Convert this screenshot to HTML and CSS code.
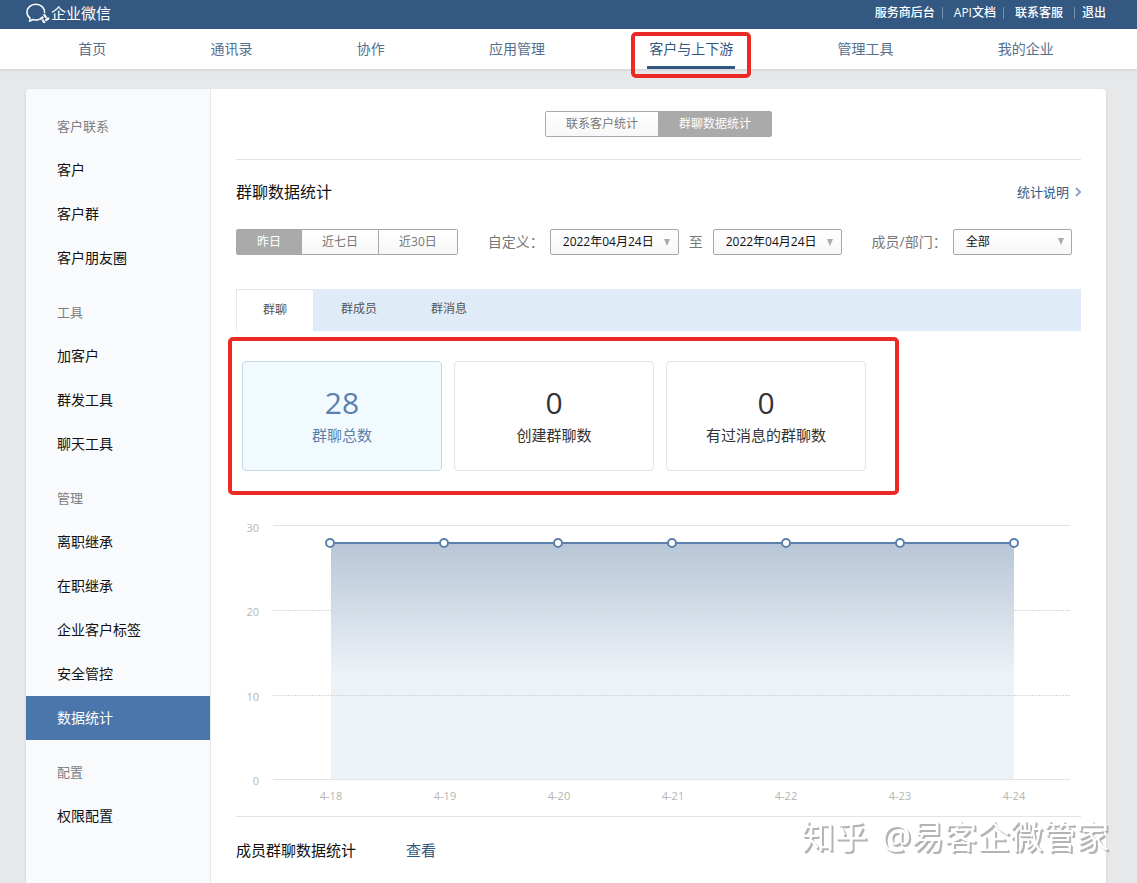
FILE: index.html
```html
<!DOCTYPE html>
<html lang="zh-CN">
<head>
<meta charset="utf-8">
<meta name="viewport" content="width=device-width, initial-scale=1">
<title>企业微信 - 群聊数据统计</title>
<link rel="stylesheet" href="styles.css">
</head>
<body>
<header class="topbar">
  <a class="brand" href="#">
    <svg class="brand-icon" viewBox="0 0 24 20" fill="none" aria-hidden="true">
      <path d="M18.600 9.600C18.600 4.800 15 1.300 9.800 1.300S1 4.800 1 9.200C1 11.700 2.200 13.900 4.100 15.200L3.500 18.300 6.800 16.500C8.800 17.200 11 17.200 12.900 16.500" stroke="#fff" stroke-width="1.500" stroke-linecap="round" stroke-linejoin="round"/>
      <path d="M18.300 11.800 19.800 14M22.200 15.500 20.200 17M18.300 19.700 17 17.500M14.400 15.900 16.600 14.500" stroke="#fff" stroke-width="2.200" stroke-linecap="round"/>
    </svg>
    <span>企业微信</span>
  </a>
  <ul class="top-links">
    <li><a href="#">服务商后台</a></li>
    <li><a href="#">API文档</a></li>
    <li class="service"><a href="#">联系客服</a></li>
    <li class="logout"><a href="#">退出</a></li>
  </ul>
</header>
<nav class="nav">
  <a href="#">首页</a>
  <a href="#">通讯录</a>
  <a href="#">协作</a>
  <a href="#">应用管理</a>
  <a class="current" href="#"><span>客户与上下游</span></a>
  <a href="#">管理工具</a>
  <a href="#">我的企业</a>
</nav>
<div class="panel">
  <aside class="sidebar">
    <section class="group">
      <h2>客户联系</h2>
      <a href="#">客户</a>
      <a href="#">客户群</a>
      <a href="#">客户朋友圈</a>
    </section>
    <section class="group">
      <h2>工具</h2>
      <a href="#">加客户</a>
      <a href="#">群发工具</a>
      <a href="#">聊天工具</a>
    </section>
    <section class="group">
      <h2>管理</h2>
      <a href="#">离职继承</a>
      <a href="#">在职继承</a>
      <a href="#">企业客户标签</a>
      <a href="#">安全管控</a>
      <a class="active" href="#">数据统计</a>
    </section>
    <section class="group">
      <h2>配置</h2>
      <a href="#">权限配置</a>
    </section>
  </aside>
  <main class="main">
    <div class="switch-row">
      <div class="segment">
        <button type="button">联系客户统计</button>
        <button type="button" class="on">群聊数据统计</button>
      </div>
    </div>
    <div class="title-row">
      <h1>群聊数据统计</h1>
      <a class="help" href="#">统计说明
        <svg class="chevron" viewBox="0 0 6 10" fill="none" aria-hidden="true"><path d="M1 1 5 5 1 9" stroke="#8fa5bd" stroke-width="2"/></svg>
      </a>
    </div>
    <div class="filters">
      <div class="segment">
        <button type="button" class="on">昨日</button>
        <button type="button">近七日</button>
        <button type="button">近30日</button>
      </div>
      <div class="field">
        <span id="range-label">自定义：</span>
        <div class="range" role="group" aria-labelledby="range-label">
          <button type="button" class="picker">2022年04月24日<i class="arrow"></i></button>
          <span>至</span>
          <button type="button" class="picker">2022年04月24日<i class="arrow"></i></button>
        </div>
      </div>
      <div class="field">
        <label for="dept">成员/部门：</label>
        <div class="select-box">
          <select id="dept"><option>全部</option></select>
          <i class="arrow"></i>
        </div>
      </div>
    </div>
    <div class="tabs" role="tablist">
      <button type="button" role="tab" aria-selected="true" class="selected">群聊</button>
      <button type="button" role="tab" aria-selected="false">群成员</button>
      <button type="button" role="tab" aria-selected="false">群消息</button>
    </div>
    <div class="cards">
      <button type="button" class="card chosen"><strong>28</strong><span>群聊总数</span></button>
      <button type="button" class="card"><strong>0</strong><span>创建群聊数</span></button>
      <button type="button" class="card"><strong>0</strong><span>有过消息的群聊数</span></button>
    </div>
    <svg class="chart" viewBox="0 0 845 296" role="img" aria-label="群聊总数">
      <defs>
        <linearGradient id="fade" x1="0" y1="0" x2="0" y2="1">
          <stop offset="0" stop-color="#b8c6d7"/>
          <stop offset="0.560" stop-color="#edf2f7"/>
          <stop offset="1" stop-color="#edf2f6"/>
        </linearGradient>
      </defs>
      <rect x="95" y="32" width="683" height="236" fill="url(#fade)"/>
      <g class="grid">
        <path d="M37 14.500H834M37 268.500H834"/>
        <path class="dashed" d="M37 99.500H834M37 184.500H834"/>
      </g>
      <g class="axis y-axis">
        <text x="23" y="21">30</text>
        <text x="23" y="105">20</text>
        <text x="23" y="190">10</text>
        <text x="23" y="274">0</text>
      </g>
      <g class="axis x-axis">
        <text x="95" y="289">4-18</text>
        <text x="209" y="289">4-19</text>
        <text x="323" y="289">4-20</text>
        <text x="437" y="289">4-21</text>
        <text x="550" y="289">4-22</text>
        <text x="664" y="289">4-23</text>
        <text x="778" y="289">4-24</text>
      </g>
      <g class="series">
        <path d="M94 32H778"/>
        <circle cx="94" cy="32" r="4"/>
        <circle cx="208" cy="32" r="4"/>
        <circle cx="322" cy="32" r="4"/>
        <circle cx="436" cy="32" r="4"/>
        <circle cx="550" cy="32" r="4"/>
        <circle cx="664" cy="32" r="4"/>
        <circle cx="778" cy="32" r="4"/>
      </g>
    </svg>
    <div class="members">
      <h2>成员群聊数据统计</h2>
      <a href="#">查看</a>
    </div>
  </main>
</div>
<div class="watermark"><span>知乎</span><span>@易客企微管家</span></div>
</body>
</html>
```
FILE: styles.css
```css
* { box-sizing: border-box; }

body {
  margin: 0;
  min-height: 100vh;
  display: flex;
  flex-direction: column;
  background: #e7e8ea;
  color: #111;
  font: 14px/20px "Open Sans", "Noto Sans CJK SC", sans-serif;
}

a { color: inherit; text-decoration: none; }
button, select { font: inherit; color: inherit; margin: 0; cursor: pointer; }
h1, h2 { margin: 0; font-weight: 400; }

.topbar {
  display: flex;
  justify-content: space-between;
  align-items: center;
  height: 29px;
  padding: 0 31px 4px 26px;
  background: #335882;
  color: #fff;
}
.brand {
  display: flex;
  align-items: center;
  gap: 1px;
  font-size: 15px;
}
.brand-icon { width: 24px; height: 20px; }

.top-links {
  display: flex;
  margin: 0;
  padding: 0;
  list-style: none;
  font-size: 12px;
  font-weight: 500;
  line-height: 12px;
}
.top-links li { padding: 0 7px 0 11px; }
.top-links li + li { border-left: 1px solid #7790ae; }
.top-links .service { padding-right: 11px; }
.top-links .logout { padding: 0 0 0 7px; }

.nav {
  display: flex;
  height: 41px;
  padding: 0 31px 0 26px;
  background: #fff;
  border-bottom: 1px solid #d6d8da;
  box-shadow: 0 1px 2px rgba(0, 0, 0, 0.06);
  color: #54708f;
}
.nav a {
  flex: 1 1 auto;
  text-align: center;
  line-height: 40px;
}
.nav .current { color: #335882; }
.nav .current span {
  position: relative;
  display: inline-block;
  height: 40px;
  margin: 0 -2px;
  padding: 0 2px;
  border-bottom: 3px solid #335882;
}
/* Highlight frame around the current entry */
.nav .current span::after {
  content: "";
  position: absolute;
  inset: 3px -16px -12px;
  border: 4px solid #ec2a25;
  border-radius: 5px;
}

.panel {
  flex: 1;
  display: flex;
  margin: 19px 31px 0 26px;
  background: #fff;
  border-radius: 4px 4px 0 0;
  box-shadow: 0 1px 2px rgba(0, 0, 0, 0.15);
}

.sidebar {
  flex: 0 0 185px;
  padding-top: 5px;
  background: #f8fafc;
  border-right: 1px solid #e4e8ec;
  border-radius: 4px 0 0 0;
}
.group { padding-top: 10px; }
.group h2,
.group a {
  display: block;
  padding-left: 31px;
  line-height: 44px;
}
.group h2 { font-size: 13px; color: #7d8084; }
.group .active { background: #4a76ab; color: #fff; }

.main { flex: 1; min-width: 0; padding: 22px 25px 0; }

.switch-row {
  display: flex;
  justify-content: center;
  padding-bottom: 22px;
  border-bottom: 1px solid #e2e3e5;
}
.segment {
  display: flex;
  height: 26px;
  border: 1px solid #a8a8a8;
  border-radius: 2px;
  font-size: 12px;
  line-height: 24px;
  color: #777;
}
.segment button {
  padding: 0 20px;
  border: 0;
  background: linear-gradient(#fff, #f7f7f7);
}
.segment button + button { border-left: 1px solid #a8a8a8; }
.segment .on { background: #aaa; color: #fff; }

.title-row {
  display: flex;
  justify-content: space-between;
  align-items: center;
  padding: 20px 0 25px;
}
.title-row h1 { font-size: 16px; line-height: 24px; }
.help {
  display: flex;
  align-items: center;
  gap: 6px;
  font-size: 13px;
  color: #335882;
}
.chevron { width: 6px; height: 10px; }

.filters { display: flex; gap: 30px; color: #777; }
.field { display: flex; align-items: center; gap: 6px; white-space: nowrap; }
.range { display: flex; align-items: center; gap: 10px; }
.picker,
.select-box select {
  height: 26px;
  padding: 0 24px 0 12px;
  border: 1px solid #a8a8a8;
  border-radius: 2px;
  background: linear-gradient(#fff, #f7f7f7);
  font-size: 12px;
  line-height: 24px;
  color: #111;
  text-align: left;
}
.picker,
.select-box { position: relative; }
.select-box select { width: 119px; appearance: none; }
.arrow {
  position: absolute;
  top: 9px;
  right: 8px;
  border: 3px solid transparent;
  border-top: 7px solid #aaa;
  border-bottom: 0;
  pointer-events: none;
}

.tabs {
  display: flex;
  height: 42px;
  margin-top: 34px;
  background: #e0ebf8;
  font-size: 12px;
  color: #555;
}
.tabs button { padding: 0 27px 2px; border: 0; background: none; }
.tabs .selected {
  padding: 0 26px 2px;
  background: #fff;
  border: 1px solid #e0e8f0;
  border-bottom: 0;
}

/* Tiles inside the highlight frame */
.cards {
  display: flex;
  gap: 12px;
  width: fit-content;
  margin: 6px 0 0 -8px;
  padding: 20px 29px 20px 10px;
  border: 4px solid #ec2a25;
  border-radius: 5px;
}
.card {
  display: flex;
  flex-direction: column;
  align-items: center;
  justify-content: center;
  gap: 3px;
  width: 200px;
  height: 110px;
  padding: 0 0 4px;
  border: 1px solid #e2e4e6;
  border-radius: 4px;
  background: #fff;
  color: #333;
  font-size: 15px;
}
.card strong { font-size: 30px; font-weight: 400; line-height: 38px; }
.card.chosen { background: #f1faff; border-color: #c8d9e3; color: #5b80ab; }

.chart { display: block; width: 100%; margin-top: 16px; }
.grid { fill: none; stroke: #e0e2e4; }
.grid .dashed { stroke: #d5d8db; stroke-dasharray: 2 1; }
.axis { fill: #b5b5b5; font-size: 11px; }
.y-axis { text-anchor: end; }
.x-axis { text-anchor: middle; }
.series { fill: #fff; stroke: #5b80ab; stroke-width: 2; }

.members {
  display: flex;
  gap: 50px;
  margin-top: 9px;
  padding: 23px 0 20px;
  border-top: 1px solid #e2e3e5;
  font-size: 15px;
}
.members h2 { font-size: 15px; }
.members a { color: #335882; }

.watermark {
  position: fixed;
  right: 28px;
  bottom: 24px;
  display: flex;
  gap: 14px;
  font-size: 33px;
  line-height: 44px;
  color: #fff;
  text-shadow: 1px 1px 0 #b4b4b4, 2px 2px 0 #b4b4b4;
  white-space: nowrap;
  pointer-events: none;
}
```
